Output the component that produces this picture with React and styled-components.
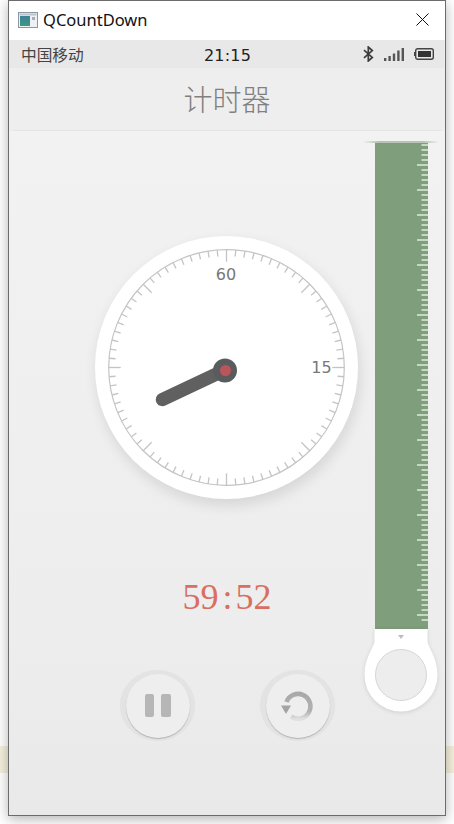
import React from "react";
import styled, { createGlobalStyle } from "styled-components";

const GlobalStyle = createGlobalStyle`
  html, body {
    margin: 0;
    padding: 0;
    height: 824px;
    overflow: hidden;
    background: linear-gradient(
      to bottom,
      #ffffff 0,
      #ffffff 746px,
      #f6f0dd 746px,
      #f6f0dd 773px,
      #ffffff 773px
    );
  }
  * {
    box-sizing: border-box;
  }
`;

const Window = styled.div`
  width: 438px;
  height: 816px;
  margin-left: 8px;
  display: flex;
  flex-direction: column;
  border: 1px solid #6c6c6c;
  box-shadow: 0 3px 12px rgba(0, 0, 0, 0.3);
  background: #eee;
`;

const TitleBar = styled.div`
  height: 39px;
  flex: none;
  display: flex;
  align-items: center;
  padding: 0 16px 2px 9px;
  background: #fff;
`;

const WindowTitle = styled.div`
  margin-left: 5px;
  flex: 1;
  font: 16.5px "Noto Sans", "Open Sans", sans-serif;
  color: #111;
`;

const StatusBar = styled.div`
  height: 28px;
  flex: none;
  display: grid;
  grid-template-columns: 1fr auto 1fr;
  align-items: center;
  padding: 0 10px 0 12px;
  margin-right: 1px;
  background: #e8e8e8;
`;

const Carrier = styled.div`
  font: 15.7px "Noto Sans CJK SC", sans-serif;
  color: #444;
`;

const Clock = styled.div`
  padding-top: 2px;
  font: 16px "DejaVu Sans", sans-serif;
  letter-spacing: 0.2px;
  color: #222;
`;

const StatusIcons = styled.div`
  display: flex;
  align-items: center;
  justify-content: flex-end;
  gap: 10px;
`;

const Header = styled.div`
  height: 63px;
  flex: none;
  display: flex;
  align-items: center;
  justify-content: center;
  padding-bottom: 4px;
  background: #eeeeee;
  position: relative;
  font: 300 29px "Noto Sans CJK SC", sans-serif;
  color: #808080;

  &::after {
    content: "";
    position: absolute;
    left: 4px;
    right: 4px;
    bottom: 0;
    height: 1px;
    background: #e3e3e3;
  }
`;

const Body = styled.div`
  flex: 1;
  display: grid;
  background: linear-gradient(to bottom, #f2f2f2, #ededed 75%, #e9e9e9);
`;

const Main = styled.div`
  grid-area: 1 / 1;
  display: flex;
  flex-direction: column;
  align-items: center;
  padding: 105px 2px 0 0;
`;

const Dial = styled.div`
  width: 263px;
  height: 263px;
  border-radius: 50%;
  background: #fff;
  box-shadow: 2px 6px 14px rgba(0, 0, 0, 0.11);
  flex: none;
`;

const Countdown = styled.div`
  margin: 74px 0 0 2px;
  height: 48px;
  line-height: 48px;
  display: flex;
  font-family: "Liberation Serif", serif;
  font-size: 36px;
  color: #d96e62;
`;

const Colon = styled.span`
  margin: 0 3px 0 4px;
`;

const Controls = styled.div`
  margin: 49px 0 0 3px;
  display: flex;
  gap: 65px;
`;

const RoundButton = styled.div`
  width: 75px;
  height: 71px;
  border-radius: 50%;
  display: flex;
  align-items: center;
  justify-content: center;
  background: #e3e3e3;
  box-shadow: 0 0 1px #e6e6e6;
`;

const ButtonFace = styled.div`
  width: 64px;
  height: 64px;
  border-radius: 50%;
  display: flex;
  align-items: center;
  justify-content: center;
  gap: 7px;
  background: #eeeeee;
  box-shadow: 0 1px 1px rgba(0, 0, 0, 0.22);
`;

const PauseBar = styled.span`
  width: 9.5px;
  height: 23px;
  border-radius: 2px;
  background: #b6b6b6;
`;

const Slider = styled.div`
  grid-area: 1 / 1;
  justify-self: end;
  align-self: start;
  width: 74px;
  margin: 10px 7px 0 0;
  display: flex;
  flex-direction: column;
  align-items: center;
`;

const Lip = styled.div`
  width: 76px;
  height: 2px;
  background: linear-gradient(to right, transparent, #b9c2b7 20%, #b9c2b7 80%, transparent);
`;

const Tube = styled.div`
  width: 53px;
  height: 486px;
  background: #7f9e7b;
`;

const Bulb = styled.svg`
  display: block;
  overflow: visible;
  filter: drop-shadow(0 1px 2px rgba(0, 0, 0, 0.12));
`;

const AppIcon = () => (
  <svg width="20" height="16" viewBox="0 0 20 16">
    <rect x="0.5" y="0.5" width="19" height="15" fill="#eef1f3" stroke="#8b98a3" />
    <rect x="1.5" y="1.5" width="17" height="2" fill="#b9c4cc" />
    <defs>
      <linearGradient id="appFill" x1="0" y1="0" x2="0" y2="1">
        <stop offset="0" stopColor="#3f7f9c" />
        <stop offset="1" stopColor="#3b9c7a" />
      </linearGradient>
    </defs>
    <rect x="2" y="4" width="10" height="10" fill="url(#appFill)" />
    <rect x="14" y="5" width="3" height="3" fill="#9fb0ba" />
  </svg>
);

const CloseIcon = () => (
  <svg width="13" height="13" viewBox="0 0 13 13">
    <path d="M0.5 0.5L12.5 12.5M12.5 0.5L0.5 12.5" stroke="#111" strokeWidth="1" />
  </svg>
);

const BluetoothIcon = () => (
  <svg width="11" height="16" viewBox="0 0 11 16">
    <path
      d="M1 4.2L9.3 11.4L5.3 15V1L9.3 4.6L1 11.8"
      fill="none"
      stroke="#3d3d3d"
      strokeWidth="1.7"
    />
  </svg>
);

const SignalIcon = () => (
  <svg width="20" height="13" viewBox="0 0 20 13">
    <rect x="0" y="10" width="2.4" height="3" fill="#555" />
    <rect x="4.4" y="8" width="2.4" height="5" fill="#555" />
    <rect x="8.8" y="5.5" width="2.4" height="7.5" fill="#555" />
    <rect x="13.2" y="2.5" width="2.4" height="10.5" fill="#555" />
    <rect x="17.6" y="0" width="2.4" height="13" fill="#555" />
  </svg>
);

const BatteryIcon = () => (
  <svg width="20" height="12" viewBox="0 0 20 12">
    <rect x="0" y="4" width="2" height="4" fill="#444" />
    <rect x="1.7" y="0.7" width="17.6" height="10.6" rx="2" fill="#e8e8e8" stroke="#444" strokeWidth="1.4" />
    <rect x="4" y="3" width="13" height="6" fill="#333" />
  </svg>
);

const ResetIcon = () => (
  <svg width="32" height="30" viewBox="0 0 32 30" style={{ marginLeft: -1 }}>
    <defs>
      <linearGradient id="resetFade" x1="0" y1="0" x2="0" y2="1">
        <stop offset="0" stopColor="#a9a9a9" />
        <stop offset="0.7" stopColor="#b2b2b2" />
        <stop offset="1" stopColor="#e0e0e0" />
      </linearGradient>
    </defs>
    <path
      d="M5.4 11A12.4 12.4 0 1 1 10 25.6"
      fill="none"
      stroke="url(#resetFade)"
      strokeWidth="4.6"
    />
    <path d="M0 14.5H10L5 23Z" fill="#a3a3a3" />
  </svg>
);

// dial face: 80 ticks, a long one every 45 degrees
const DialFace = () => {
  const c = 131.5;
  const r = 117.8;
  const ticks = Array.from({ length: 80 }, (_, i) => {
    const a = (i * 4.5 * Math.PI) / 180;
    const len = i % 10 === 0 ? 12 : 6.5;
    return (
      <line
        key={i}
        x1={c + Math.sin(a) * r}
        y1={c - Math.cos(a) * r}
        x2={c + Math.sin(a) * (r - len)}
        y2={c - Math.cos(a) * (r - len)}
        stroke="#c4c4c4"
        strokeWidth="1.3"
      />
    );
  });
  return (
    <svg width="263" height="263" viewBox="0 0 263 263" style={{ display: "block" }}>
      <circle cx={c} cy={c} r={r} fill="none" stroke="#c4c4c4" strokeWidth="1.2" />
      {ticks}
      <text x={c - 0.5} y={43.5} textAnchor="middle" fontFamily="DejaVu Sans" fontSize="16" fill="#787878">
        60
      </text>
      <text x={226.5} y={137} textAnchor="middle" fontFamily="DejaVu Sans" fontSize="16" fill="#787878">
        15
      </text>
      <line x1="130" y1="134" x2="67.5" y2="163.5" stroke="#606060" strokeWidth="13.5" strokeLinecap="round" />
      <circle cx="130" cy="134.5" r="12" fill="#5a5b5e" />
      <circle cx="130.5" cy="134.5" r="5.5" fill="#bb555c" />
    </svg>
  );
};

const Ruler = () => {
  const ticks = Array.from({ length: 96 }, (_, i) => {
    const len = i % 5 === 4 ? 11 : 6.5;
    return <rect key={i} x={53 - len} y={1 + i * 5} width={len} height="2" fill="#c6d8c3" />;
  });
  return (
    <svg width="53" height="486" viewBox="0 0 53 486" style={{ display: "block" }}>
      {ticks}
    </svg>
  );
};

const App = () => (
  <>
    <GlobalStyle />
    <Window>
      <TitleBar>
        <AppIcon />
        <WindowTitle>QCountDown</WindowTitle>
        <CloseIcon />
      </TitleBar>
      <StatusBar>
        <Carrier>中国移动</Carrier>
        <Clock>21:15</Clock>
        <StatusIcons>
          <BluetoothIcon />
          <SignalIcon />
          <BatteryIcon />
        </StatusIcons>
      </StatusBar>
      <Header>计时器</Header>
      <Body>
        <Main>
          <Dial>
            <DialFace />
          </Dial>
          <Countdown>
            59<Colon>:</Colon>52
          </Countdown>
          <Controls>
            <RoundButton>
              <ButtonFace>
                <PauseBar />
                <PauseBar />
              </ButtonFace>
            </RoundButton>
            <RoundButton>
              <ButtonFace>
                <ResetIcon />
              </ButtonFace>
            </RoundButton>
          </Controls>
        </Main>
        <Slider>
          <Lip />
          <Tube>
            <Ruler />
          </Tube>
          <Bulb width="74" height="83" viewBox="0 0 74 83">
            <path
              d="M10.5 0H63.5V12C63.5 18 73.5 28 73.5 46A36.5 36.5 0 1 1 0.5 46C0.5 28 10.5 18 10.5 12Z"
              fill="#fff"
            />
            <path d="M34 6H40L37 10Z" fill="#bdbdbd" />
            <circle cx="37" cy="46" r="25.5" fill="#ededed" stroke="#d6d6d6" strokeWidth="1" />
          </Bulb>
        </Slider>
      </Body>
    </Window>
  </>
);

export default App;
